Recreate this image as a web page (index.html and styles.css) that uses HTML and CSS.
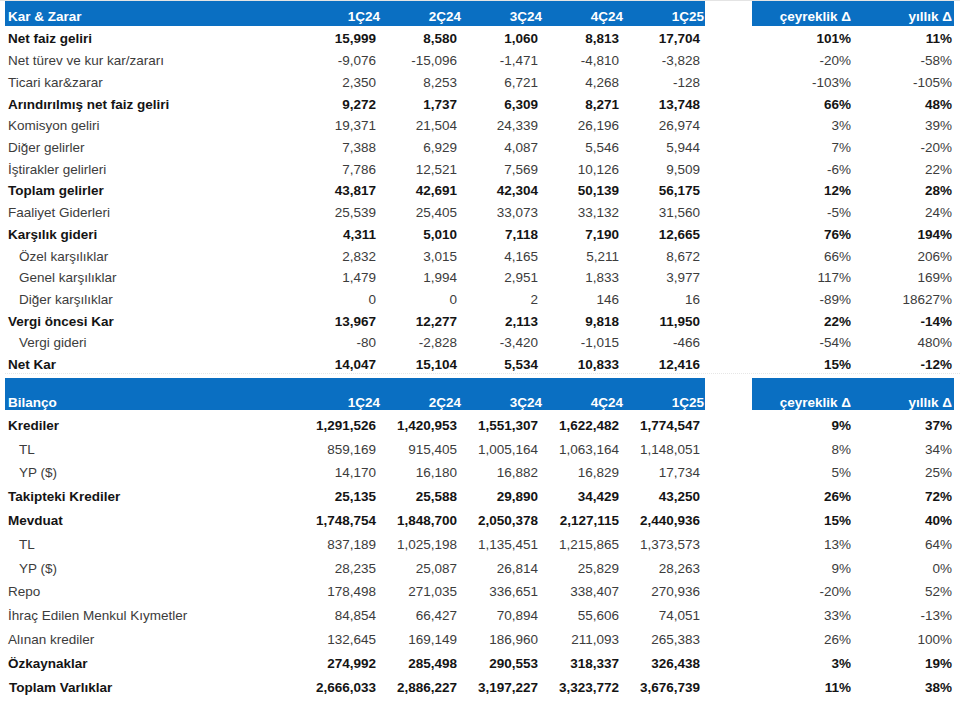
FILE: index.html
```html
<!DOCTYPE html>
<html lang="tr">
<head>
<meta charset="utf-8">
<title>Kar &amp; Zarar / Bilanço</title>
<link rel="stylesheet" href="styles.css">
</head>
<body>
<div class="topline"></div>
<div class="sheet">
  <section class="sec s1">
    <div class="row hd">
      <span class="lbl">Kar &amp; Zarar</span><span class="num">1Ç24</span><span class="num">2Ç24</span><span class="num">3Ç24</span><span class="num">4Ç24</span><span class="num">1Ç25</span><span class="gap"></span><span class="pct">çeyreklik Δ</span><span class="pct">yıllık Δ</span>
    </div>
    <div class="row b"><span class="lbl">Net faiz geliri</span><span class="num">15,999</span><span class="num">8,580</span><span class="num">1,060</span><span class="num">8,813</span><span class="num">17,704</span><span class="gap"></span><span class="pct">101%</span><span class="pct">11%</span></div>
    <div class="row"><span class="lbl">Net türev ve kur kar/zararı</span><span class="num">-9,076</span><span class="num">-15,096</span><span class="num">-1,471</span><span class="num">-4,810</span><span class="num">-3,828</span><span class="gap"></span><span class="pct">-20%</span><span class="pct">-58%</span></div>
    <div class="row"><span class="lbl">Ticari kar&amp;zarar</span><span class="num">2,350</span><span class="num">8,253</span><span class="num">6,721</span><span class="num">4,268</span><span class="num">-128</span><span class="gap"></span><span class="pct">-103%</span><span class="pct">-105%</span></div>
    <div class="row b"><span class="lbl">Arındırılmış net faiz geliri</span><span class="num">9,272</span><span class="num">1,737</span><span class="num">6,309</span><span class="num">8,271</span><span class="num">13,748</span><span class="gap"></span><span class="pct">66%</span><span class="pct">48%</span></div>
    <div class="row"><span class="lbl">Komisyon geliri</span><span class="num">19,371</span><span class="num">21,504</span><span class="num">24,339</span><span class="num">26,196</span><span class="num">26,974</span><span class="gap"></span><span class="pct">3%</span><span class="pct">39%</span></div>
    <div class="row"><span class="lbl">Diğer gelirler</span><span class="num">7,388</span><span class="num">6,929</span><span class="num">4,087</span><span class="num">5,546</span><span class="num">5,944</span><span class="gap"></span><span class="pct">7%</span><span class="pct">-20%</span></div>
    <div class="row"><span class="lbl">İştirakler gelirleri</span><span class="num">7,786</span><span class="num">12,521</span><span class="num">7,569</span><span class="num">10,126</span><span class="num">9,509</span><span class="gap"></span><span class="pct">-6%</span><span class="pct">22%</span></div>
    <div class="row b"><span class="lbl">Toplam gelirler</span><span class="num">43,817</span><span class="num">42,691</span><span class="num">42,304</span><span class="num">50,139</span><span class="num">56,175</span><span class="gap"></span><span class="pct">12%</span><span class="pct">28%</span></div>
    <div class="row"><span class="lbl">Faaliyet Giderleri</span><span class="num">25,539</span><span class="num">25,405</span><span class="num">33,073</span><span class="num">33,132</span><span class="num">31,560</span><span class="gap"></span><span class="pct">-5%</span><span class="pct">24%</span></div>
    <div class="row b"><span class="lbl">Karşılık gideri</span><span class="num">4,311</span><span class="num">5,010</span><span class="num">7,118</span><span class="num">7,190</span><span class="num">12,665</span><span class="gap"></span><span class="pct">76%</span><span class="pct">194%</span></div>
    <div class="row ind"><span class="lbl">Özel karşılıklar</span><span class="num">2,832</span><span class="num">3,015</span><span class="num">4,165</span><span class="num">5,211</span><span class="num">8,672</span><span class="gap"></span><span class="pct">66%</span><span class="pct">206%</span></div>
    <div class="row ind"><span class="lbl">Genel karşılıklar</span><span class="num">1,479</span><span class="num">1,994</span><span class="num">2,951</span><span class="num">1,833</span><span class="num">3,977</span><span class="gap"></span><span class="pct">117%</span><span class="pct">169%</span></div>
    <div class="row ind"><span class="lbl">Diğer karşılıklar</span><span class="num">0</span><span class="num">0</span><span class="num">2</span><span class="num">146</span><span class="num">16</span><span class="gap"></span><span class="pct">-89%</span><span class="pct">18627%</span></div>
    <div class="row b"><span class="lbl">Vergi öncesi Kar</span><span class="num">13,967</span><span class="num">12,277</span><span class="num">2,113</span><span class="num">9,818</span><span class="num">11,950</span><span class="gap"></span><span class="pct">22%</span><span class="pct">-14%</span></div>
    <div class="row ind"><span class="lbl">Vergi gideri</span><span class="num">-80</span><span class="num">-2,828</span><span class="num">-3,420</span><span class="num">-1,015</span><span class="num">-466</span><span class="gap"></span><span class="pct">-54%</span><span class="pct">480%</span></div>
    <div class="row b last"><span class="lbl">Net Kar</span><span class="num">14,047</span><span class="num">15,104</span><span class="num">5,534</span><span class="num">10,833</span><span class="num">12,416</span><span class="gap"></span><span class="pct">15%</span><span class="pct">-12%</span></div>
  </section>

  <section class="sec s2">
    <div class="row hd">
      <span class="lbl">Bilanço</span><span class="num">1Ç24</span><span class="num">2Ç24</span><span class="num">3Ç24</span><span class="num">4Ç24</span><span class="num">1Ç25</span><span class="gap"></span><span class="pct">çeyreklik Δ</span><span class="pct">yıllık Δ</span>
    </div>
    <div class="row b"><span class="lbl">Krediler</span><span class="num">1,291,526</span><span class="num">1,420,953</span><span class="num">1,551,307</span><span class="num">1,622,482</span><span class="num">1,774,547</span><span class="gap"></span><span class="pct">9%</span><span class="pct">37%</span></div>
    <div class="row ind"><span class="lbl">TL</span><span class="num">859,169</span><span class="num">915,405</span><span class="num">1,005,164</span><span class="num">1,063,164</span><span class="num">1,148,051</span><span class="gap"></span><span class="pct">8%</span><span class="pct">34%</span></div>
    <div class="row ind"><span class="lbl">YP ($)</span><span class="num">14,170</span><span class="num">16,180</span><span class="num">16,882</span><span class="num">16,829</span><span class="num">17,734</span><span class="gap"></span><span class="pct">5%</span><span class="pct">25%</span></div>
    <div class="row b"><span class="lbl">Takipteki Krediler</span><span class="num">25,135</span><span class="num">25,588</span><span class="num">29,890</span><span class="num">34,429</span><span class="num">43,250</span><span class="gap"></span><span class="pct">26%</span><span class="pct">72%</span></div>
    <div class="row b"><span class="lbl">Mevduat</span><span class="num">1,748,754</span><span class="num">1,848,700</span><span class="num">2,050,378</span><span class="num">2,127,115</span><span class="num">2,440,936</span><span class="gap"></span><span class="pct">15%</span><span class="pct">40%</span></div>
    <div class="row ind"><span class="lbl">TL</span><span class="num">837,189</span><span class="num">1,025,198</span><span class="num">1,135,451</span><span class="num">1,215,865</span><span class="num">1,373,573</span><span class="gap"></span><span class="pct">13%</span><span class="pct">64%</span></div>
    <div class="row ind"><span class="lbl">YP ($)</span><span class="num">28,235</span><span class="num">25,087</span><span class="num">26,814</span><span class="num">25,829</span><span class="num">28,263</span><span class="gap"></span><span class="pct">9%</span><span class="pct">0%</span></div>
    <div class="row"><span class="lbl">Repo</span><span class="num">178,498</span><span class="num">271,035</span><span class="num">336,651</span><span class="num">338,407</span><span class="num">270,936</span><span class="gap"></span><span class="pct">-20%</span><span class="pct">52%</span></div>
    <div class="row"><span class="lbl">İhraç Edilen Menkul Kıymetler</span><span class="num">84,854</span><span class="num">66,427</span><span class="num">70,894</span><span class="num">55,606</span><span class="num">74,051</span><span class="gap"></span><span class="pct">33%</span><span class="pct">-13%</span></div>
    <div class="row"><span class="lbl">Alınan krediler</span><span class="num">132,645</span><span class="num">169,149</span><span class="num">186,960</span><span class="num">211,093</span><span class="num">265,383</span><span class="gap"></span><span class="pct">26%</span><span class="pct">100%</span></div>
    <div class="row b"><span class="lbl">Özkaynaklar</span><span class="num">274,992</span><span class="num">285,498</span><span class="num">290,553</span><span class="num">318,337</span><span class="num">326,438</span><span class="gap"></span><span class="pct">3%</span><span class="pct">19%</span></div>
    <div class="row b"><span class="lbl lbl-wide">Toplam Varlıklar</span><span class="num">2,666,033</span><span class="num">2,886,227</span><span class="num">3,197,227</span><span class="num">3,323,772</span><span class="num">3,676,739</span><span class="gap"></span><span class="pct">11%</span><span class="pct">38%</span></div>
  </section>
</div>
</body>
</html>
```

FILE: styles.css
```css
* { box-sizing: border-box; }

html, body {
  margin: 0;
  padding: 0;
  background: #ffffff;
}

body {
  width: 960px;
  height: 708px;
  overflow: hidden;
  font-family: "Liberation Sans", Arial, sans-serif;
  font-size: 13.5px;
  color: #3c3c3c;
}

.topline {
  height: 1px;
  background: #e4e4e4;
}

.sheet {
  padding-left: 5px;
}

.row {
  display: grid;
  grid-template-columns: 295px repeat(5, 81px) 47px 101px 101px;
  align-items: center;
  height: 21.73px;
  padding-top: 4px;
  white-space: nowrap;
}

.lbl {
  padding-left: 3px;
}

.lbl-wide {
  padding-left: 4px;
}

.num {
  text-align: right;
  padding-right: 5px;
}

.pct {
  text-align: right;
  padding-right: 2px;
}

.b {
  font-weight: bold;
  color: #141414;
}

.ind .lbl {
  padding-left: 14px;
}

.last {
  border-bottom: 1px dotted #e6e6e6;
}

/* header rows */
.hd {
  height: 25px;
  padding-top: 0;
  align-items: stretch;
  font-weight: bold;
  color: #ffffff;
}

.hd > span {
  display: flex;
  align-items: flex-end;
  padding-bottom: 2px;
  background: #0a6fc2;
}

.hd > .num,
.hd > .pct {
  justify-content: flex-end;
}

.hd > .num {
  padding-right: 1px;
}

.hd > .gap {
  background: transparent;
}

.s2 {
  margin-top: 4px;
}

.s2 .hd {
  height: 32px;
  margin-bottom: 2px;
}

.s2 .hd > span {
  padding-bottom: 0;
}

.s2 .row:not(.hd) {
  height: 23.8px;
}
```
